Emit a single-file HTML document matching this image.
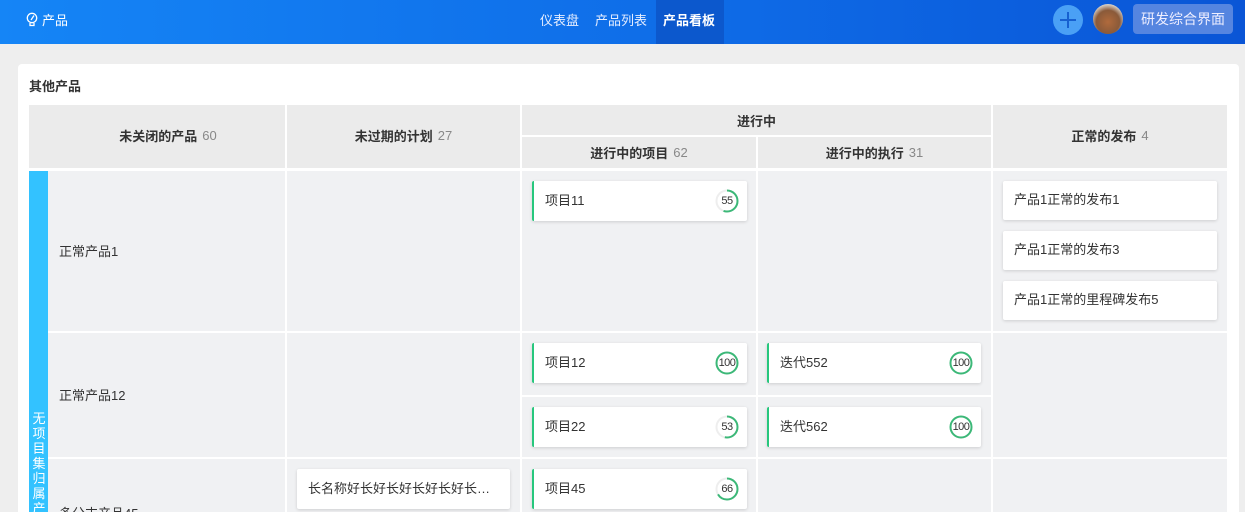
<!DOCTYPE html>
<html style="width:1245px;height:512px;overflow:hidden"><head><meta charset="utf-8"><style>
*{margin:0;padding:0;box-sizing:border-box}
body{width:1245px;height:512px;overflow:hidden;background:#eeeeee;font-family:"Liberation Sans","Noto Sans CJK SC",sans-serif;font-size:13px;color:#333;position:relative}
.hdr{position:absolute;left:0;top:0;width:1245px;height:44px;background:linear-gradient(90deg,#1585f6,#0e6ae6 60%,#0a55d6)}
.a{position:absolute}
.nav{color:#e6eeff;font-size:13px;top:10px}
.card{position:absolute;left:18px;top:64px;width:1221px;height:448px;background:#fff;border-radius:4px 4px 0 0}
.c{position:absolute;background:#f0f1f3}
.h{position:absolute;background:#ebebeb;font-weight:bold;color:#333;display:flex;align-items:center;justify-content:center;font-size:13px}
.h span{color:#888;font-weight:normal;margin-left:5px}
.k{position:absolute;background:#fff;height:40px;box-shadow:0 1px 3px rgba(0,0,0,.15);border-radius:2px;padding-left:11px;line-height:40px;font-size:13px;color:#333}
.g{border-left:2px solid #27c77d}
.k svg{position:absolute;right:8px;top:8px}
.k b{position:absolute;right:8px;top:8px;width:24px;height:24px;line-height:24px;text-align:center;font-weight:normal;font-size:11px;letter-spacing:-.5px}
</style></head><body>
<div class="hdr"></div>
<svg class="a" style="left:26px;top:12px" width="12" height="15" viewBox="0 0 12 15"><circle cx="6" cy="6" r="4.7" fill="none" stroke="#fff" stroke-width="1.3"/><path d="M4 11v2.5h4V11M8 3.5L5 8" stroke="#fff" stroke-width="1.3" fill="none"/></svg>
<div class="a" style="left:42px;top:10px;color:#fff;font-size:13px">产品</div>
<div class="a nav" style="left:540px">仪表盘</div>
<div class="a nav" style="left:595px">产品列表</div>
<div class="a" style="left:656px;top:0;width:68px;height:44px;background:#0c58cd"></div>
<div class="a nav" style="left:663px;color:#fff;font-weight:bold">产品看板</div>
<div class="a" style="left:1053px;top:5px;width:30px;height:30px;border-radius:50%;background:#4aa0f5"></div>
<div class="a" style="left:1060px;top:19px;width:16px;height:2px;background:#1760d0"></div>
<div class="a" style="left:1067px;top:12px;width:2px;height:16px;background:#1760d0"></div>
<div class="a" style="left:1093px;top:4px;width:30px;height:30px;border-radius:50%;background:radial-gradient(circle at 50% 60%,#b06a3c,#8a5a3a 50%,#d6d0c8 75%,#6a7a86)"></div>
<div class="a" style="left:1133px;top:4px;width:100px;height:30px;border-radius:4px;background:#5585e0;color:#eef;font-size:14px;line-height:30px;text-align:center">研发综合界面</div>
<div class="card"></div>
<div class="a" style="left:29px;top:76px;font-weight:bold;font-size:13px;color:#333">其他产品</div>

<div class="h" style="left:29px;top:105px;width:256px;height:63px;padding-left:22px;padding-bottom:2px">未关闭的产品<span>60</span></div>
<div class="h" style="left:287px;top:105px;width:233px;height:63px;padding-bottom:2px">未过期的计划<span>27</span></div>
<div class="h" style="left:522px;top:105px;width:469px;height:30px">进行中</div>
<div class="h" style="left:522px;top:137px;width:234px;height:31px">进行中的项目<span>62</span></div>
<div class="h" style="left:758px;top:137px;width:233px;height:31px">进行中的执行<span>31</span></div>
<div class="h" style="left:993px;top:105px;width:234px;height:63px;padding-bottom:2px">正常的发布<span>4</span></div>

<div class="a" style="left:29px;top:171px;width:19px;height:341px;background:#33c2ff;overflow:hidden"><div style="position:absolute;left:2px;top:240px;width:16px;color:#fff;font-size:13px;line-height:15px;text-align:center">无<br>项<br>目<br>集<br>归<br>属<br>产<br>品</div></div>

<div class="c" style="left:48px;top:171px;width:237px;height:160px"></div>
<div class="c" style="left:287px;top:171px;width:233px;height:160px"></div>
<div class="c" style="left:522px;top:171px;width:234px;height:160px"></div>
<div class="c" style="left:758px;top:171px;width:233px;height:160px"></div>
<div class="c" style="left:993px;top:171px;width:234px;height:160px"></div>
<div class="c" style="left:48px;top:333px;width:237px;height:124px"></div>
<div class="c" style="left:287px;top:333px;width:233px;height:124px"></div>
<div class="c" style="left:522px;top:333px;width:234px;height:62px"></div>
<div class="c" style="left:758px;top:333px;width:233px;height:62px"></div>
<div class="c" style="left:522px;top:397px;width:234px;height:60px"></div>
<div class="c" style="left:758px;top:397px;width:233px;height:60px"></div>
<div class="c" style="left:993px;top:333px;width:234px;height:124px"></div>
<div class="c" style="left:48px;top:459px;width:237px;height:53px"></div>
<div class="c" style="left:287px;top:459px;width:233px;height:53px"></div>
<div class="c" style="left:522px;top:459px;width:234px;height:53px"></div>
<div class="c" style="left:758px;top:459px;width:233px;height:53px"></div>
<div class="c" style="left:993px;top:459px;width:234px;height:53px"></div>

<div class="a" style="left:59px;top:241px">正常产品1</div>
<div class="a" style="left:59px;top:385px">正常产品12</div>
<div class="a" style="left:59px;top:503px;height:9px;overflow:hidden">多分支产品45</div>

<div class="k g" style="left:532px;top:181px;width:215px">项目11<svg width="24" height="24"><circle cx="12" cy="12" r="10.5" fill="none" stroke="#eee" stroke-width="2"/><circle cx="12" cy="12" r="10.5" fill="none" stroke="#3cb878" stroke-width="2" stroke-dasharray="36.3 100" transform="rotate(-90 12 12)"/></svg><b>55</b></div>
<div class="k g" style="left:532px;top:343px;width:215px">项目12<svg width="24" height="24"><circle cx="12" cy="12" r="10.5" fill="none" stroke="#3cb878" stroke-width="2"/></svg><b>100</b></div>
<div class="k g" style="left:532px;top:407px;width:215px">项目22<svg width="24" height="24"><circle cx="12" cy="12" r="10.5" fill="none" stroke="#eee" stroke-width="2"/><circle cx="12" cy="12" r="10.5" fill="none" stroke="#3cb878" stroke-width="2" stroke-dasharray="35 100" transform="rotate(-90 12 12)"/></svg><b>53</b></div>
<div class="k g" style="left:532px;top:469px;width:215px">项目45<svg width="24" height="24"><circle cx="12" cy="12" r="10.5" fill="none" stroke="#eee" stroke-width="2"/><circle cx="12" cy="12" r="10.5" fill="none" stroke="#3cb878" stroke-width="2" stroke-dasharray="43.5 100" transform="rotate(-90 12 12)"/></svg><b>66</b></div>
<div class="k g" style="left:767px;top:343px;width:214px">迭代552<svg width="24" height="24"><circle cx="12" cy="12" r="10.5" fill="none" stroke="#3cb878" stroke-width="2"/></svg><b>100</b></div>
<div class="k g" style="left:767px;top:407px;width:214px">迭代562<svg width="24" height="24"><circle cx="12" cy="12" r="10.5" fill="none" stroke="#3cb878" stroke-width="2"/></svg><b>100</b></div>
<div class="k" style="left:297px;top:469px;width:213px">长名称好长好长好长好长好长…</div>
<div class="k" style="left:1003px;top:181px;width:214px;height:39px;line-height:38px">产品1正常的发布1</div>
<div class="k" style="left:1003px;top:231px;width:214px;height:39px;line-height:38px">产品1正常的发布3</div>
<div class="k" style="left:1003px;top:281px;width:214px;height:39px;line-height:38px">产品1正常的里程碑发布5</div>
</body></html>
